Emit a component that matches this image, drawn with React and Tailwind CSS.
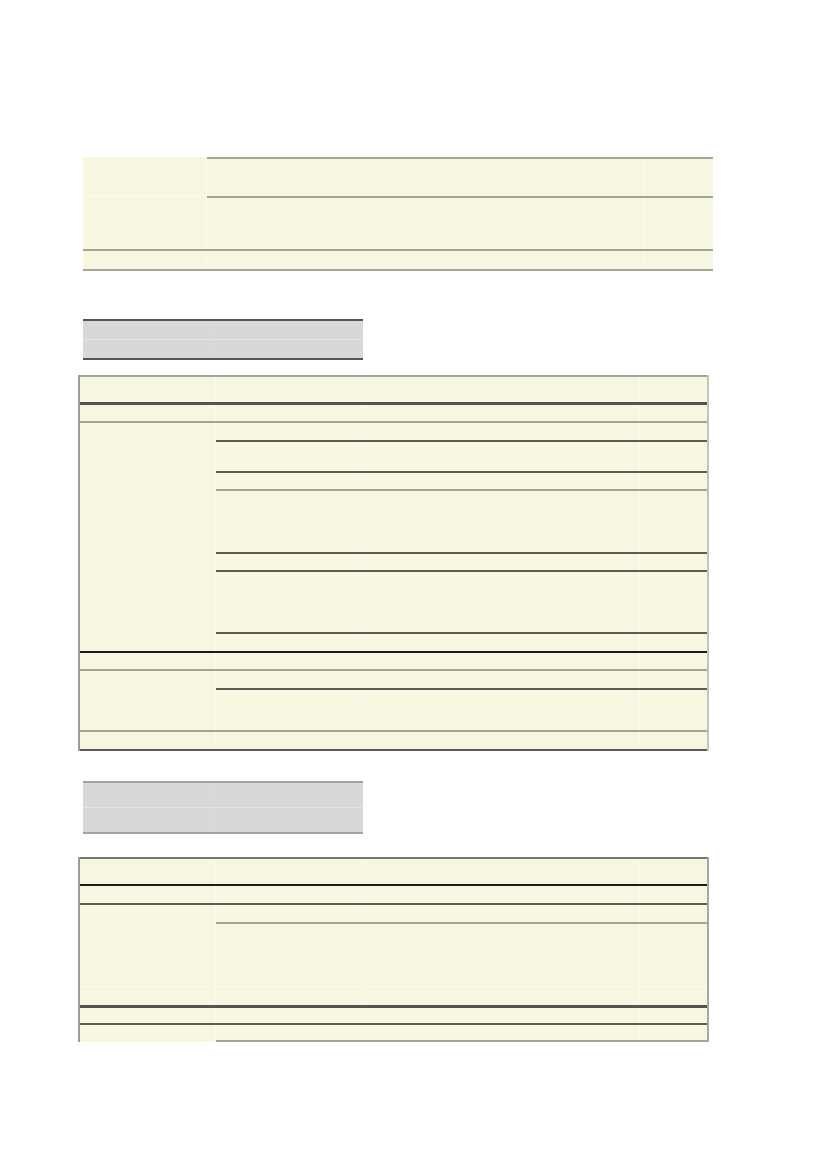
const cream = 'bg-[#f7f7e1]'

function Cells({ className = '' }) {
  // three right-hand cells of the wide tables
  return (
    <div className={`flex h-full divide-x divide-[#fbfbee] ${className}`}>
      <div className="w-[147px] shrink-0" />
      <div className="w-[277px] shrink-0" />
      <div className="flex-1" />
    </div>
  )
}

function SubRow({ h, line }) {
  return (
    <div className={`${h} ${line}`}>
      <Cells />
    </div>
  )
}

function FullRow({ h, line, extra = '' }) {
  return (
    <div className={`flex divide-x divide-[#fbfbee] ${h} ${line} ${extra}`}>
      <div className="w-[136px] shrink-0" />
      <div className="w-[147px] shrink-0" />
      <div className="w-[277px] shrink-0" />
      <div className="flex-1" />
    </div>
  )
}

const gray = 'border-t-2 border-[#a4a497]'
const dark = 'border-t-2 border-[#5c5c54]'
const darkThick = 'border-t-[3px] border-[#55554f]'
const black = 'border-t-2 border-[#1c1c1a]'

function TopTable() {
  return (
    <div className={`ml-[83px] w-[630px] ${cream}`}>
      <div className="flex">
        <div className="w-[124px] shrink-0 flex flex-col border-r border-[#fbfbee]">
          <div className="h-[39px] border-b border-[#fbfbee]" />
          <div className="flex-1" />
        </div>
        <div className="flex-1">
          <div className={`h-[39px] ${gray}`}>
            <div className="flex h-full divide-x divide-[#fbfbee]">
              <div className="w-[156px] shrink-0" />
              <div className="w-[282px] shrink-0" />
              <div className="flex-1" />
            </div>
          </div>
          <div className={`h-[53px] ${gray}`}>
            <div className="flex h-full divide-x divide-[#fbfbee]">
              <div className="w-[156px] shrink-0" />
              <div className="w-[282px] shrink-0" />
              <div className="flex-1" />
            </div>
          </div>
        </div>
      </div>
      <div className={`flex h-[22px] ${gray} border-b-2 divide-x divide-[#fbfbee]`}>
        <div className="w-[124px] shrink-0" />
        <div className="w-[156px] shrink-0" />
        <div className="w-[282px] shrink-0" />
        <div className="flex-1" />
      </div>
    </div>
  )
}

function GrayBox({ h, line, mt }) {
  return (
    <div className={`ml-[83px] w-[280px] bg-[#d8d8d8] flex flex-col ${h} ${mt} border-t-2 border-b-2 ${line}`}>
      <div className="flex flex-1 border-b border-[#e3e3e3]">
        <div className="w-[127px] shrink-0 border-r border-[#dcdcdc]" />
        <div className="flex-1" />
      </div>
      <div className="flex flex-1">
        <div className="w-[127px] shrink-0 border-r border-[#dcdcdc]" />
        <div className="flex-1" />
      </div>
    </div>
  )
}

function SecondTable() {
  return (
    <div className={`ml-[78px] w-[631px] mt-[15px] ${cream} border-l-2 border-l-[#9c9c96] border-r-2 border-r-[#c4c4ba]`}>
      <FullRow h="h-[27px]" line={gray} />
      <FullRow h="h-[19px]" line={darkThick} />
      <div className={`flex ${gray}`}>
        <div className="w-[136px] shrink-0 border-r border-[#fbfbee]" />
        <div className="flex-1">
          <SubRow h="h-[17px]" line="" />
          <SubRow h="h-[31px]" line={dark} />
          <SubRow h="h-[18px]" line={dark} />
          <SubRow h="h-[63px]" line={gray} />
          <SubRow h="h-[18px]" line={dark} />
          <SubRow h="h-[62px]" line={dark} />
          <SubRow h="h-[19px]" line={dark} />
        </div>
      </div>
      <FullRow h="h-[18px]" line={black} />
      <div className={`flex ${gray}`}>
        <div className="w-[136px] shrink-0 border-r border-[#fbfbee]" />
        <div className="flex-1">
          <SubRow h="h-[17px]" line="" />
          <SubRow h="h-[42px]" line={dark} />
        </div>
      </div>
      <FullRow h="h-[21px]" line={gray} extra="border-b-2 border-b-[#5c5c54]" />
    </div>
  )
}

function ThirdTable() {
  return (
    <div className={`ml-[78px] w-[631px] mt-[23px] ${cream} border-l-2 border-l-[#9c9c96] border-r-2 border-r-[#a8a8a0]`}>
      <FullRow h="h-[27px]" line="border-t-2 border-[#77776f]" />
      <FullRow h="h-[19px]" line={black} />
      <div className={`flex ${dark}`}>
        <div className="w-[136px] shrink-0 flex flex-col border-r border-[#fbfbee]">
          <div className="flex-1" />
          <div className="h-[19px] border-t border-[#fbfbee]" />
        </div>
        <div className="flex-1">
          <SubRow h="h-[17px]" line="" />
          <SubRow h="h-[64px]" line={gray} />
          <SubRow h="h-[19px]" line="border-t border-[#fbfbee]" />
        </div>
      </div>
      <FullRow h="h-[18px]" line={darkThick} />
      <div className={`flex h-[19px] ${dark}`}>
        <div className="w-[136px] shrink-0 border-r border-[#fbfbee]" />
        <div className="flex-1 border-b-2 border-[#a4a497]">
          <Cells />
        </div>
      </div>
    </div>
  )
}

export default function App() {
  return (
    <div className="w-[827px] h-[1169px] bg-white pt-[157px] font-['Liberation_Sans',sans-serif]">
      <TopTable />
      <GrayBox h="h-[41px]" line="border-[#55554f]" mt="mt-[48px]" />
      <SecondTable />
      <GrayBox h="h-[53px]" line="border-[#a2a2a0]" mt="mt-[30px]" />
      <ThirdTable />
    </div>
  )
}
